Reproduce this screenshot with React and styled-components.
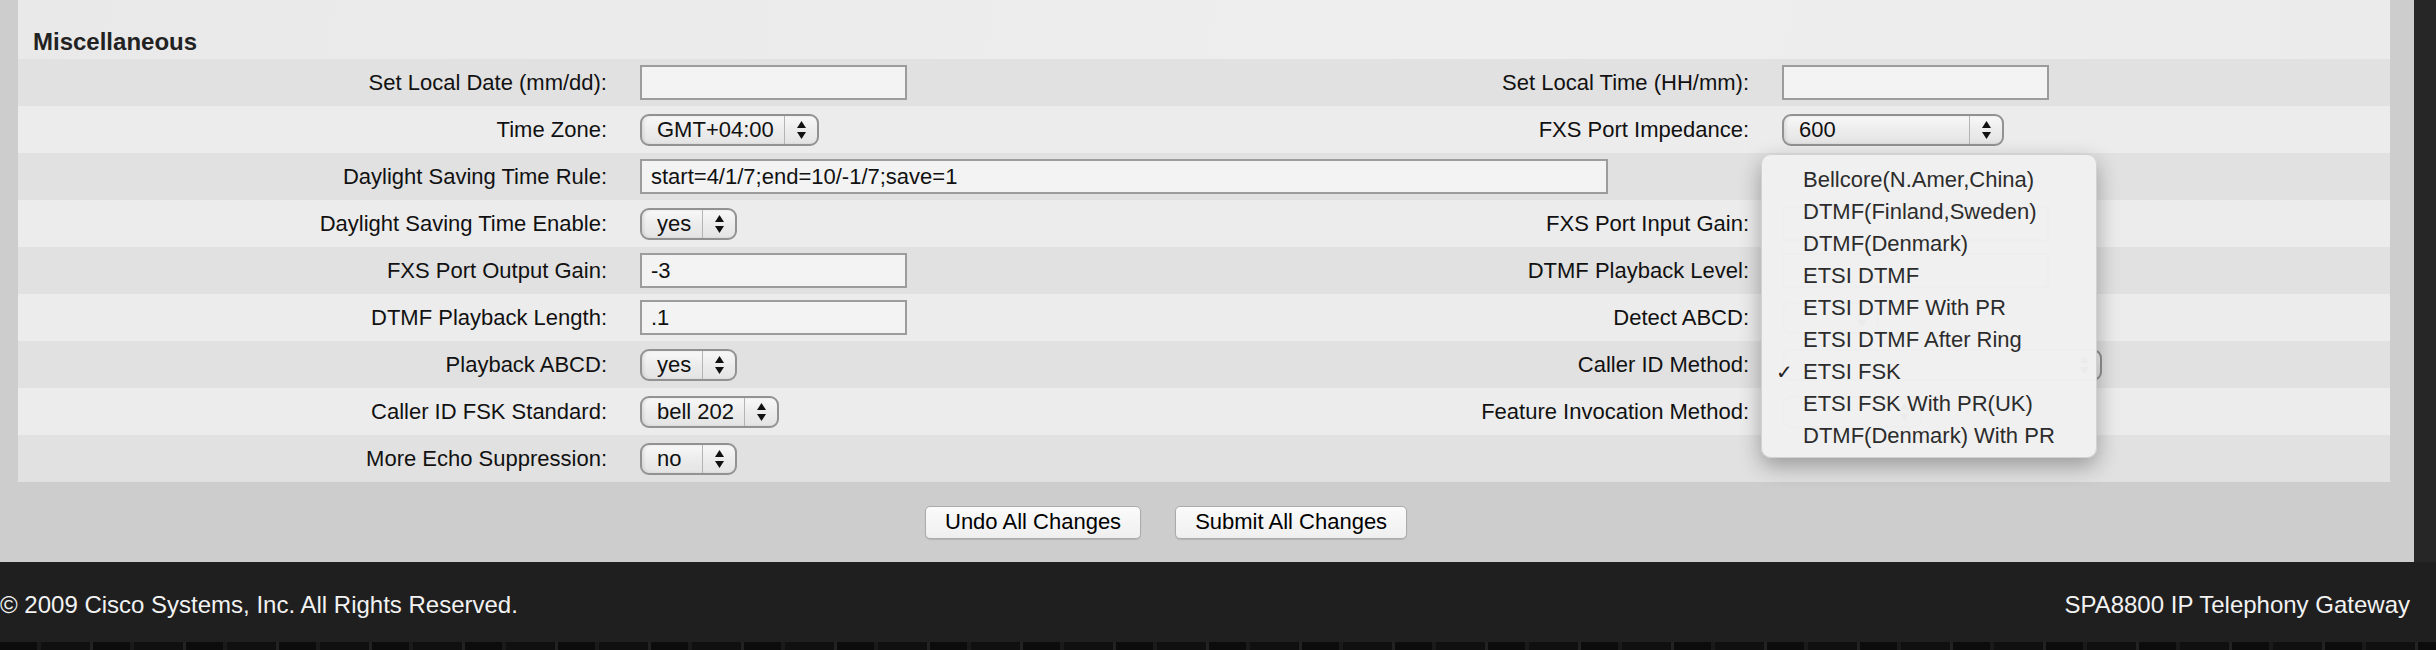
import React from "react";
import styled, { createGlobalStyle } from "styled-components";

const GlobalStyle = createGlobalStyle`
  html, body {
    margin: 0;
    padding: 0;
    background: #1f1f1f;
  }
  body {
    width: 2436px;
    height: 650px;
    overflow: hidden;
    font-family: "Liberation Sans", Arial, Helvetica, sans-serif;
    color: #111;
  }
`;

const Page = styled.div`
  display: flex;
  flex-direction: column;
  width: 2436px;
  height: 650px;
`;

const Main = styled.div`
  display: flex;
  height: 562px;
  background: linear-gradient(90deg, #3a3a3a, #262626);
`;

const Frame = styled.div`
  width: 2414px;
  box-sizing: border-box;
  padding: 0 24px 0 18px;
  background: #cdcdcd;
  display: flex;
  flex-direction: column;
`;

const Panel = styled.div`
  background: linear-gradient(100deg, #e9e9e9, #eeeeee 60%, #ebebeb);
  height: 482px;
`;

const Title = styled.h2`
  margin: 0;
  height: 59px;
  box-sizing: border-box;
  padding: 28px 0 0 15px;
  font-size: 24px;
  line-height: 28px;
  font-weight: bold;
  color: #222;
`;

const Row = styled.div`
  display: grid;
  grid-template-columns: 589px 842px 300px 1fr;
  align-items: center;
  height: 47px;
  background: ${(p) => (p.$shade ? "#e1e1e1" : "#ececec")};
`;

const Label = styled.div`
  text-align: right;
  font-size: 22px;
  white-space: nowrap;
  color: #111;
`;

const Cell = styled.div`
  display: flex;
  align-items: center;
  padding-left: 33px;
  grid-column: ${(p) => (p.$span ? "span 2" : "auto")};
`;

const TextInput = styled.div`
  box-sizing: border-box;
  width: ${(p) => p.$w || 267}px;
  height: 35px;
  border: 2px solid #9c9c9c;
  background: #f3f3f3;
  padding: 0 9px;
  font-size: 22px;
  line-height: 31px;
  color: #111;
  white-space: nowrap;
`;

const SelectWrap = styled.div`
  position: relative;
`;

const SelectBox = styled.div`
  box-sizing: border-box;
  display: flex;
  align-items: stretch;
  width: ${(p) => p.$w}px;
  height: 32px;
  border: 2px solid #929292;
  border-radius: 9px;
  background: linear-gradient(#f8f8f8, #ebebeb 55%, #e4e4e4);
  box-shadow: inset 2px 0 3px rgba(0, 0, 0, 0.08);
  font-size: 22px;
  color: #111;
`;

const SelectValue = styled.span`
  flex: 1;
  padding-left: 15px;
  line-height: 28px;
  white-space: nowrap;
  overflow: hidden;
`;

const SelectArrows = styled.span`
  width: 32px;
  border-left: 1px solid #b4b4b4;
  display: flex;
  align-items: center;
  justify-content: center;
`;

const Menu = styled.div`
  position: absolute;
  top: -195px;
  left: -21px;
  width: 336px;
  height: 304px;
  box-sizing: border-box;
  padding: 9px 0 7px;
  background: rgba(240, 240, 240, 0.98);
  border: 1px solid #d2d2d2;
  border-radius: 10px;
  box-shadow: 0 8px 22px rgba(0, 0, 0, 0.32);
  z-index: 5;
`;

const MenuItem = styled.div`
  position: relative;
  height: 32px;
  line-height: 32px;
  padding-left: 41px;
  font-size: 22px;
  color: #2c2c2c;
  white-space: nowrap;
`;

const Check = styled.span`
  position: absolute;
  left: 14px;
  top: 0;
  font-size: 20px;
  color: #222;
`;

const ButtonBar = styled.div`
  display: flex;
  align-items: center;
  gap: 34px;
  height: 80px;
  padding-left: 907px;
`;

const Button = styled.button`
  height: 33px;
  padding: 0 19px;
  font-family: "Liberation Sans", Arial, sans-serif;
  font-size: 22px;
  color: #000;
  background: linear-gradient(#fbfbfb, #efefef);
  border: 1px solid #ababab;
  border-radius: 5px;
  box-shadow: 0 1px 1px rgba(0, 0, 0, 0.12);
`;

const Footer = styled.footer`
  display: flex;
  align-items: center;
  justify-content: space-between;
  height: 80px;
  padding: 6px 26px 0 0;
  box-sizing: border-box;
  background: #1f1f1f;
  color: #f2f2f2;
  font-size: 24px;
`;

const Ground = styled.div`
  height: 8px;
  background: repeating-linear-gradient(90deg, #0c0c0c 0 37px, #1a1a1a 37px 41px, #101010 41px 90px, #222 90px 93px);
`;

function Arrows() {
  return (
    <svg width="9" height="18" viewBox="0 0 9 18">
      <polygon points="4.5,0 9,7 0,7" fill="#111" />
      <polygon points="0,11 9,11 4.5,18" fill="#111" />
    </svg>
  );
}

function Select({ value, w, children }) {
  return (
    <SelectWrap>
      <SelectBox $w={w}>
        <SelectValue>{value}</SelectValue>
        <SelectArrows>
          <Arrows />
        </SelectArrows>
      </SelectBox>
      {children}
    </SelectWrap>
  );
}

const callerIdOptions = [
  "Bellcore(N.Amer,China)",
  "DTMF(Finland,Sweden)",
  "DTMF(Denmark)",
  "ETSI DTMF",
  "ETSI DTMF With PR",
  "ETSI DTMF After Ring",
  "ETSI FSK",
  "ETSI FSK With PR(UK)",
  "DTMF(Denmark) With PR",
];

export default function App() {
  return (
    <Page>
      <GlobalStyle />
      <Main>
        <Frame>
          <Panel>
            <Title>Miscellaneous</Title>

            <Row $shade>
              <Label>Set Local Date (mm/dd):</Label>
              <Cell>
                <TextInput />
              </Cell>
              <Label>Set Local Time (HH/mm):</Label>
              <Cell>
                <TextInput />
              </Cell>
            </Row>

            <Row>
              <Label>Time Zone:</Label>
              <Cell>
                <Select value="GMT+04:00" w={179} />
              </Cell>
              <Label>FXS Port Impedance:</Label>
              <Cell>
                <Select value="600" w={222} />
              </Cell>
            </Row>

            <Row $shade>
              <Label>Daylight Saving Time Rule:</Label>
              <Cell $span>
                <TextInput $w={968}>start=4/1/7;end=10/-1/7;save=1</TextInput>
              </Cell>
              <Cell />
            </Row>

            {/* controls in the right column below are covered by the open menu */}
            <Row>
              <Label>Daylight Saving Time Enable:</Label>
              <Cell>
                <Select value="yes" w={97} />
              </Cell>
              <Label>FXS Port Input Gain:</Label>
              <Cell>
                <TextInput />
              </Cell>
            </Row>

            <Row $shade>
              <Label>FXS Port Output Gain:</Label>
              <Cell>
                <TextInput>-3</TextInput>
              </Cell>
              <Label>DTMF Playback Level:</Label>
              <Cell>
                <TextInput />
              </Cell>
            </Row>

            <Row>
              <Label>DTMF Playback Length:</Label>
              <Cell>
                <TextInput>.1</TextInput>
              </Cell>
              <Label>Detect ABCD:</Label>
              <Cell>
                <Select w={97} />
              </Cell>
            </Row>

            <Row $shade>
              <Label>Playback ABCD:</Label>
              <Cell>
                <Select value="yes" w={97} />
              </Cell>
              <Label>Caller ID Method:</Label>
              <Cell>
                <Select w={320}>
                  <Menu>
                    {callerIdOptions.map((opt) => (
                      <MenuItem key={opt}>
                        {opt === "ETSI FSK" && <Check>✓</Check>}
                        {opt}
                      </MenuItem>
                    ))}
                  </Menu>
                </Select>
              </Cell>
            </Row>

            <Row>
              <Label>Caller ID FSK Standard:</Label>
              <Cell>
                <Select value="bell 202" w={139} />
              </Cell>
              <Label>Feature Invocation Method:</Label>
              <Cell>
                <Select w={140} />
              </Cell>
            </Row>

            <Row $shade>
              <Label>More Echo Suppression:</Label>
              <Cell>
                <Select value="no" w={97} />
              </Cell>
              <Label />
              <Cell />
            </Row>
          </Panel>

          <ButtonBar>
            <Button>Undo All Changes</Button>
            <Button>Submit All Changes</Button>
          </ButtonBar>
        </Frame>
      </Main>
      <Footer>
        <span>© 2009 Cisco Systems, Inc. All Rights Reserved.</span>
        <span>SPA8800 IP Telephony Gateway</span>
      </Footer>
      <Ground />
    </Page>
  );
}
